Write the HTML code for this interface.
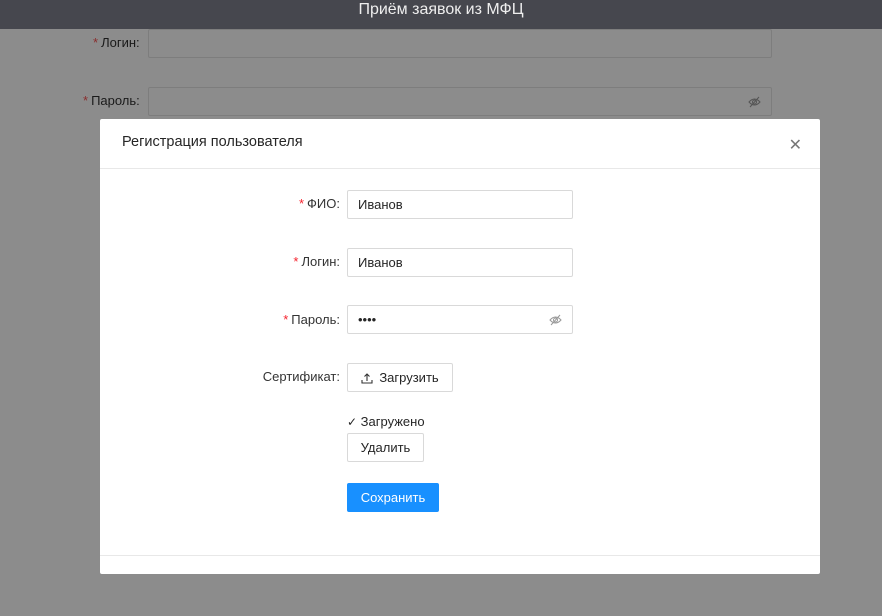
<!DOCTYPE html>
<html><head><meta charset="utf-8"><style>
*{box-sizing:border-box;margin:0;padding:0}
body{width:882px;height:616px;overflow:hidden;background:#8c8c8c;font-family:"Liberation Sans",sans-serif;font-size:13px;position:relative;color:#262626}
.top{position:absolute;left:0;top:0;width:882px;height:29px;background:#46474e;color:#eee;text-align:center;font-size:16px;line-height:19px}
.bl{position:absolute;color:#1a1a1a;font-size:13px}
.req{color:#8a2d2d;margin-right:3px}
.bi{position:absolute;border:1px solid #7d7d7d;background:#8c8c8c;border-radius:2px}
.modal{position:absolute;left:100px;top:119px;width:720px;height:455px;background:#fff;border-radius:2px}
.mh{height:50px;border-bottom:1px solid #e8e8e8;padding:15px 22px;font-size:14.5px;color:#262626}
.x{position:absolute;right:18px;top:19px;font-size:16px;color:#777;line-height:16px;font-weight:300}
.mf{position:absolute;left:0;top:436px;width:720px;border-top:1px solid #e8e8e8}
.lab{position:absolute;right:480px;width:200px;text-align:right;font-size:13px;color:#333}
.lab .req{color:#f5222d}
.inp{position:absolute;left:247px;width:226px;height:29px;border:1px solid #d9d9d9;border-radius:2px;padding:0 10px;line-height:27px;font-size:13px}
.btn{position:absolute;left:247px;border:1px solid #d9d9d9;border-radius:2px;height:29px;line-height:27px;text-align:center;font-size:13px;background:#fff}
</style></head><body>
<div class="top">Приём заявок из МФЦ</div>
<div class="bl" style="left:93px;top:35px"><span class="req">*</span>Логин:</div>
<div class="bi" style="left:148px;top:29px;width:624px;height:29px"></div>
<div class="bl" style="left:83px;top:93px"><span class="req">*</span>Пароль:</div>
<div class="bi" style="left:148px;top:87px;width:624px;height:29px"><svg style="position:absolute;right:10px;top:8px" width="13" height="12" viewBox="0 0 13 12"><path d="M1 6Q6.5 0 12 6Q6.5 12 1 6Z" fill="none" stroke="#555"/><circle cx="6.5" cy="6" r="2" fill="none" stroke="#555"/><path d="M2 11L11 1" stroke="#555"/></svg></div>
<div class="modal">
<div class="mh">Регистрация пользователя</div>
<div class="x">✕</div>
<div class="lab" style="top:77px"><span class="req">*</span>ФИО:</div>
<div class="inp" style="top:71px">Иванов</div>
<div class="lab" style="top:135px"><span class="req">*</span>Логин:</div>
<div class="inp" style="top:129px">Иванов</div>
<div class="lab" style="top:193px"><span class="req">*</span>Пароль:</div>
<div class="inp" style="top:186px">••••<svg style="position:absolute;right:10px;top:8px" width="13" height="12" viewBox="0 0 13 12"><path d="M1 6Q6.5 0 12 6Q6.5 12 1 6Z" fill="none" stroke="#999"/><circle cx="6.5" cy="6" r="2" fill="none" stroke="#999"/><path d="M2 11L11 1" stroke="#999"/></svg></div>
<div class="lab" style="top:250px">Сертификат:</div>
<div class="btn" style="top:244px;width:106px"><svg style="vertical-align:-2px;margin-right:6px" width="12" height="12" viewBox="0 0 12 12"><path d="M6 9V2M3.5 4.5L6 2L8.5 4.5M1 8V11H11V8" fill="none" stroke="#333" stroke-width="1.1"/></svg>Загрузить</div>
<div style="position:absolute;left:247px;top:295px;font-size:13px"><span style="font-size:12px">✓</span> Загружено</div>
<div class="btn" style="top:314px;width:77px">Удалить</div>
<div class="btn" style="top:364px;width:92px;background:#1890ff;border-color:#1890ff;color:#fff">Сохранить</div>
<div class="mf"></div>
</div>
</body></html>
